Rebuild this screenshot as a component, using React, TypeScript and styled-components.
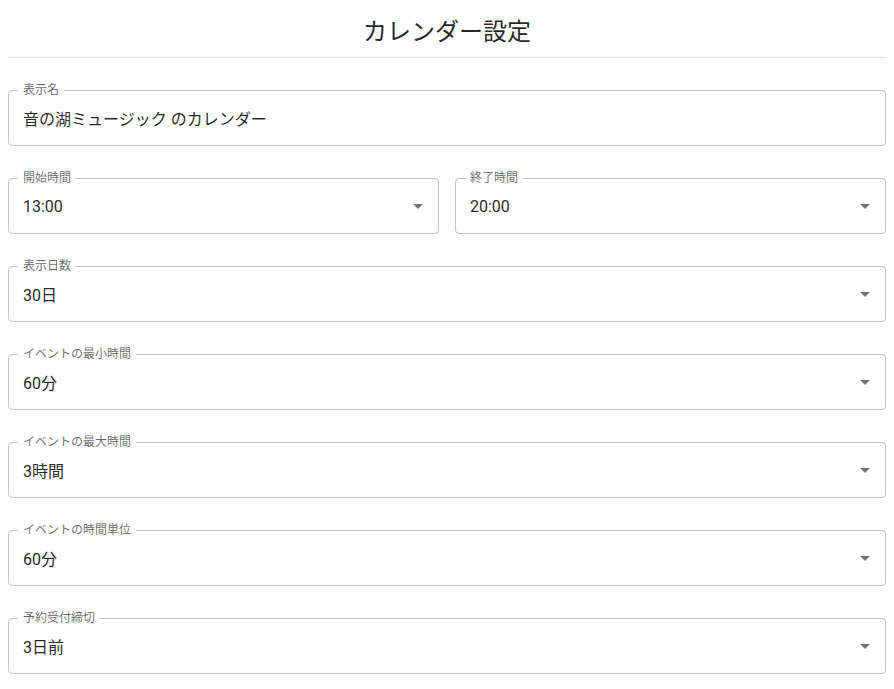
import React from "react";
import styled, { createGlobalStyle } from "styled-components";

const Global = createGlobalStyle`
  body { margin: 8px; background: #fff; font-family: Roboto, "Noto Sans CJK JP", sans-serif; color: rgba(0,0,0,0.87); }
`;

const Title = styled.h1`
  margin: 8px 0 0;
  font-size: 24px;
  font-weight: 400;
  line-height: 32px;
  text-align: center;
  padding-bottom: 9px;
  border-bottom: 1px solid rgba(0,0,0,0.12);
`;

const Form = styled.div`
  display: flex;
  flex-direction: column;
  gap: 26px;
  margin-top: 26px;
`;

const Row = styled.div`
  display: grid;
  grid-template-columns: 1fr 1fr;
  gap: 16px;
`;

const Box = styled.fieldset`
  margin: 0;
  padding: 0 14px;
  border: 1px solid rgba(0,0,0,0.23);
  border-radius: 4px;
  min-width: 0;
`;

const Legend = styled.legend`
  font-size: 12px;
  line-height: 12px;
  color: rgba(0,0,0,0.6);
  padding: 0 5px;
  margin-left: -5px;
`;

const Value = styled.div`
  height: 44px;
  margin-bottom: 5px;
  display: flex;
  align-items: center;
  justify-content: space-between;
  font-size: 16px;
`;

const Caret = styled.svg`
  width: 24px;
  height: 24px;
  margin-right: -6px;
  fill: rgba(0,0,0,0.54);
`;

function Field({ label, value, select = true }: { label: string; value: string; select?: boolean }) {
  return (
    <Box>
      <Legend>{label}</Legend>
      <Value>
        <span>{value}</span>
        {select && (
          <Caret viewBox="0 0 24 24"><path d="M7 10l5 5 5-5z" /></Caret>
        )}
      </Value>
    </Box>
  );
}

export default function App() {
  return (
    <>
      <Global />
      <Title>カレンダー設定</Title>
      <Form>
        <Field label="表示名" value="音の湖ミュージック のカレンダー" select={false} />
        <Row>
          <Field label="開始時間" value="13:00" />
          <Field label="終了時間" value="20:00" />
        </Row>
        <Field label="表示日数" value="30日" />
        <Field label="イベントの最小時間" value="60分" />
        <Field label="イベントの最大時間" value="3時間" />
        <Field label="イベントの時間単位" value="60分" />
        <Field label="予約受付締切" value="3日前" />
      </Form>
    </>
  );
}
